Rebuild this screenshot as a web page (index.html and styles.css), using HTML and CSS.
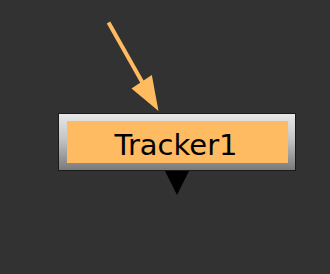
FILE: index.html
```html
<!DOCTYPE html>
<html>
<head>
<meta charset="utf-8">
<link rel="stylesheet" href="styles.css">
</head>
<body>
<div class="canvas">
  <svg class="edge" width="330" height="274" viewBox="0 0 330 274">
    <line x1="108.5" y1="22.5" x2="143" y2="83.5" stroke="#ffbb5f" stroke-width="4"/>
    <polygon points="131.5,88.5 151.8,75 158.5,111" fill="#ffbb5f"/>
  </svg>
  <div class="node">
    <div class="label">Tracker1</div>
  </div>
  <div class="output"></div>
</div>
</body>
</html>
```
FILE: styles.css
```css
html, body {
  margin: 0;
  padding: 0;
  background: #323232;
}
.canvas {
  position: relative;
  width: 330px;
  height: 274px;
  background: #323232;
  overflow: hidden;
}
.edge {
  position: absolute;
  left: 0;
  top: 0;
}
.node {
  position: absolute;
  left: 58px;
  top: 113px;
  width: 238px;
  height: 58px;
  box-sizing: border-box;
  border: 1px solid #1a1a1a;
  padding: 7px 7px 7px 8px;
  background: linear-gradient(to bottom, #e8e8e8 0%, #c4c4c4 45%, #7a7a7a 100%);
}
.label {
  box-sizing: border-box;
  width: 221px;
  height: 42px;
  padding: 6px 3px 0 0;
  background: #ffbb62;
  font-family: "DejaVu Sans", sans-serif;
  font-size: 29px;
  line-height: 36px;
  color: #000;
  text-align: center;
  white-space: nowrap;
  overflow: hidden;
}
.output {
  position: absolute;
  left: 165px;
  top: 171px;
  width: 0;
  height: 0;
  border-left: 12px solid transparent;
  border-right: 12px solid transparent;
  border-top: 24px solid #000;
}
```
